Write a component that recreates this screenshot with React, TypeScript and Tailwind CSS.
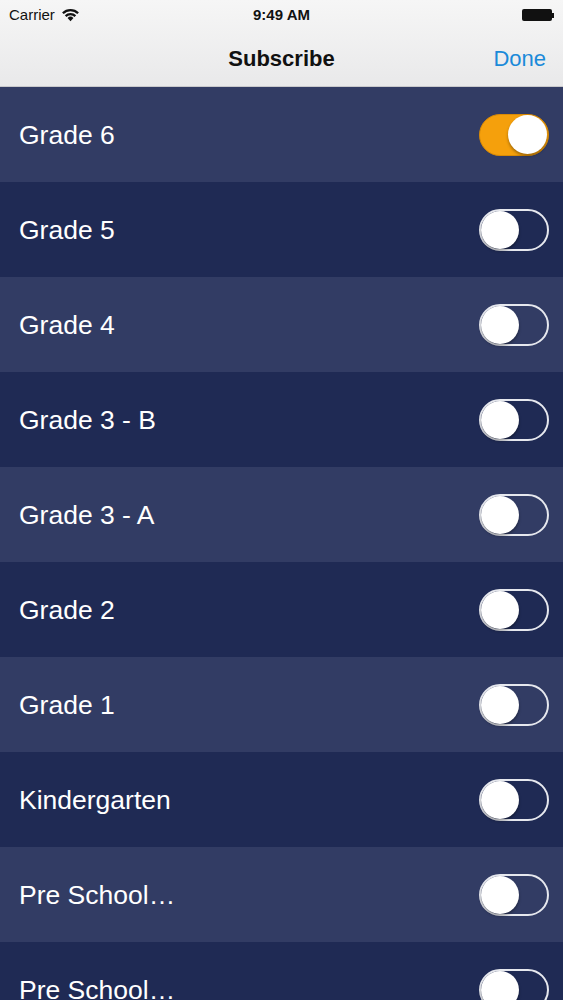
import React from "react";

const rows = [
  { label: "Grade 6", on: true },
  { label: "Grade 5", on: false },
  { label: "Grade 4", on: false },
  { label: "Grade 3 - B", on: false },
  { label: "Grade 3 - A", on: false },
  { label: "Grade 2", on: false },
  { label: "Grade 1", on: false },
  { label: "Kindergarten", on: false },
  { label: "Pre School…", on: false },
  { label: "Pre School…", on: false },
];

function Toggle({ on }: { on: boolean }) {
  if (on) {
    return (
      <div className="w-[70px] h-[42px] rounded-full bg-[#f5a00c] border border-[#d98a05] flex items-center justify-end pr-[1px]">
        <div className="w-[39px] h-[39px] rounded-full bg-white shadow-[0_2px_3px_rgba(0,0,0,0.35)]" />
      </div>
    );
  }
  return (
    <div className="w-[70px] h-[42px] rounded-full border-2 border-[#e6e8ee] flex items-center pl-0">
      <div className="w-[38px] h-[38px] rounded-full bg-white shadow-[0_2px_3px_rgba(0,0,0,0.35)]" />
    </div>
  );
}

function Wifi() {
  return (
    <svg width="19" height="14" viewBox="0 0 18 13">
      <path d="M9 12.5 L6.2 9.4 A4 4 0 0 1 11.8 9.4 Z" fill="#111" />
      <path d="M4.4 7.6 A6.6 6.6 0 0 1 13.6 7.6" stroke="#111" strokeWidth="2.2" fill="none" />
      <path d="M1.8 4.8 A10.2 10.2 0 0 1 16.2 4.8" stroke="#111" strokeWidth="2.2" fill="none" />
    </svg>
  );
}

export default function App() {
  return (
    <div className="w-[563px] h-[1000px] overflow-hidden bg-[#1e2952] font-['Liberation_Sans',Arial,sans-serif]">
      <div className="h-[87px] bg-gradient-to-b from-[#f6f6f6] to-[#e9e9ea] border-b border-[#c9c9cc] flex flex-col">
        <div className="h-[30px] relative flex items-center px-[9px] text-[15px] text-[#111]">
          <div className="flex items-center gap-[6px]">
            <span>Carrier</span>
            <Wifi />
          </div>
          <span className="absolute left-0 right-0 text-center font-bold">9:49 AM</span>
          <div className="ml-auto flex items-center">
            <div className="w-[30px] h-[12px] bg-[#111] rounded-[2px]" />
            <div className="w-[2px] h-[5px] bg-[#111]" />
          </div>
        </div>
        <div className="flex-1 relative flex items-center justify-center">
          <span className="text-[22px] font-bold text-[#111]">Subscribe</span>
          <span className="absolute right-[17px] text-[22px] text-[#1b8ad9]">Done</span>
        </div>
      </div>
      {rows.map((r, i) => (
        <div
          key={i}
          className={`h-[95px] flex items-center justify-between pl-[19px] pr-[14px] ${
            i % 2 === 0 ? "bg-[#323c64]" : "bg-[#1f2a54]"
          }`}
        >
          <span className="text-[26.5px] text-white mt-[2px]">{r.label}</span>
          <Toggle on={r.on} />
        </div>
      ))}
    </div>
  );
}
